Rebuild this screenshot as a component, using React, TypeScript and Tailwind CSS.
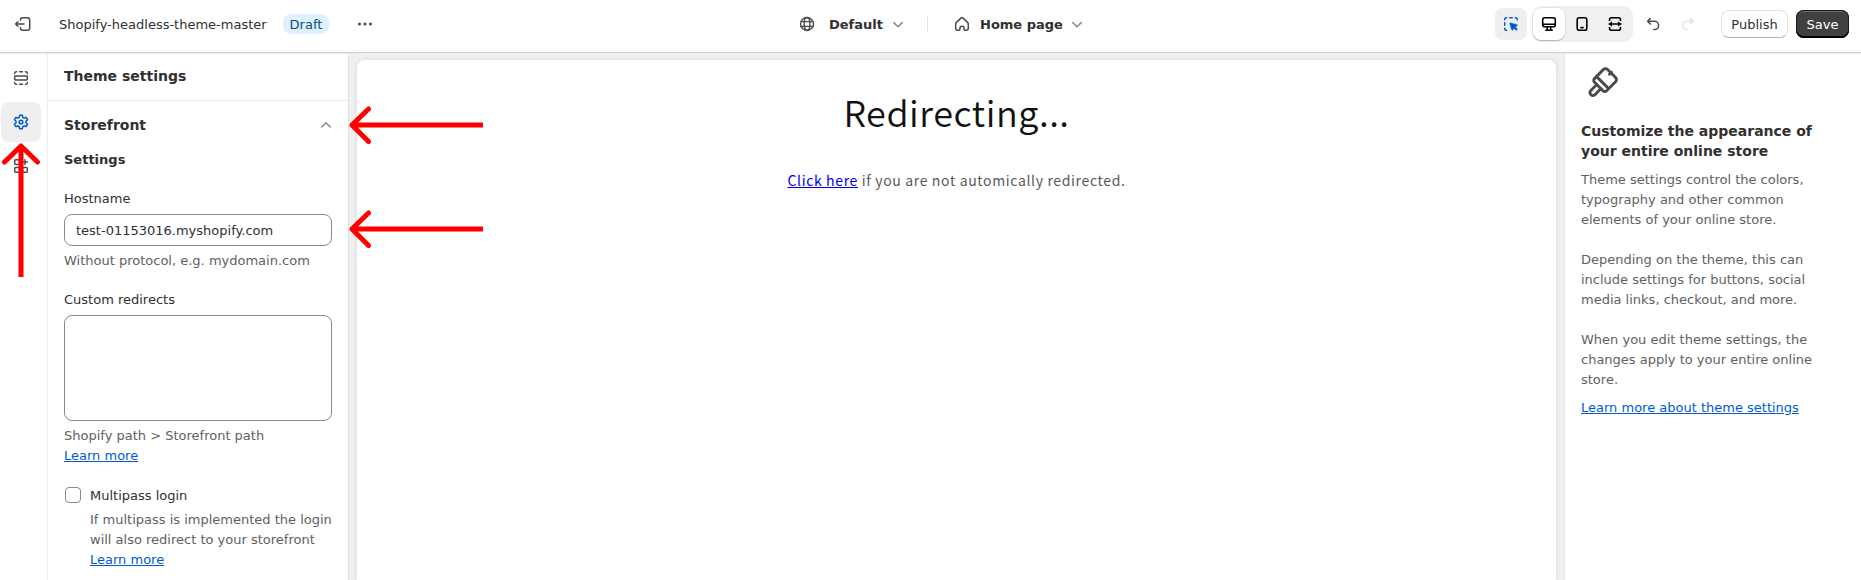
import React from "react";

type IconProps = { className?: string; children: React.ReactNode; width?: number };

function Icon({ className = "", children, width = 1.5 }: IconProps) {
  return (
    <svg
      viewBox="0 0 20 20"
      className={`block size-5 shrink-0 ${className}`}
      fill="none"
      stroke="currentColor"
      strokeWidth={width}
      strokeLinecap="round"
      strokeLinejoin="round"
    >
      {children}
    </svg>
  );
}

const ExitIcon = () => (
  <Icon className="text-[#4a4a4a]">
    <path d="M7.5 6.3v-.3A2.3 2.3 0 0 1 9.8 3.7h4.600a2.300 2.300 0 0 1 2.300 2.300v7.900a2.300 2.300 0 0 1-2.300 2.300H9.800a2.300 2.300 0 0 1-2.300-2.300v-.4" />
    <path d="M11 10H2.600M4.900 7.800 2.600 10l2.300 2.200" />
  </Icon>
);

const SectionsIcon = () => (
  <Icon className="text-[#4a4a4a]">
    <rect x="3.700" y="8" width="12.600" height="4" rx=".7" />
    <path d="M3.7 5.600v-.3c0-.9.7-1.600 1.600-1.600h.2M8.600 3.700h2.800M14.500 3.700h.2c.9 0 1.600.7 1.600 1.600v.3M3.700 14.400v.3c0 .9.7 1.600 1.600 1.600h.2M8.600 16.300h2.800M14.500 16.300h.2c.9 0 1.600-.7 1.600-1.600v-.3" />
  </Icon>
);

const GearIcon = () => (
  <Icon className="text-[#005bd3]">
    <path d="M8.7 3.2h2.6l.5 2.1 1.3.75 2.1-.6 1.3 2.25-1.55 1.5v1.6l1.55 1.5-1.3 2.25-2.1-.6-1.3.75-.5 2.1H8.7l-.5-2.1-1.3-.75-2.1.6-1.3-2.25 1.55-1.5V9.2L3.5 7.7l1.3-2.25 2.1.6 1.3-.75z" />
    <circle cx="10" cy="10" r="1.8" />
  </Icon>
);

const AppsIcon = () => (
  <Icon className="text-[#4a4a4a]">
    <rect x="3.7" y="3.7" width="4.8" height="4.8" rx="1" />
    <rect x="3.7" y="11.5" width="4.8" height="4.8" rx="1" />
    <rect x="11.5" y="11.5" width="4.8" height="4.8" rx="1" />
    <path d="M14 3.7v4.8M11.6 6.1h4.8" />
  </Icon>
);

const GlobeIcon = () => (
  <Icon className="text-[#4a4a4a]" width={1.4}>
    <circle cx="10" cy="10" r="6.5" />
    <ellipse cx="10" cy="10" rx="2.9" ry="6.5" />
    <path d="M4.2 7.6h11.6M4.2 12.4h11.6" />
  </Icon>
);

const HomeIcon = () => (
  <Icon className="text-[#4a4a4a]">
    <path d="M8.9 4.1a1.6 1.6 0 0 1 2.2 0l4.4 4.3c.5.5.8 1.1.8 1.8v4c0 1.1-.9 2-2 2h-1.5a.7.7 0 0 1-.7-.7v-1.2a2.1 2.1 0 0 0-4.2 0v1.2a.7.7 0 0 1-.7.7H5.7a2 2 0 0 1-2-2v-4c0-.7.3-1.3.8-1.8z" />
  </Icon>
);

const ChevronDown = () => (
  <Icon className="text-[#8a8a8a]">
    <path d="m5.8 8.6 4.2 4.2 4.2-4.2" />
  </Icon>
);

const ChevronUp = () => (
  <Icon className="text-[#8a8a8a]">
    <path d="M5.8 12 10 7.8l4.2 4.2" />
  </Icon>
);

const InspectorIcon = () => (
  <Icon className="text-[#005bd3]">
    <path d="M3.7 5.8v-.5c0-.9.7-1.6 1.6-1.6h.4M8.7 3.7h2.6M14.3 3.7h.4c.9 0 1.6.7 1.6 1.6v.5M3.7 8.8v2.4M3.7 14.3v.4c0 .9.7 1.6 1.6 1.6h.4" />
    <path
      d="M9.6 8.9a.6.6 0 0 0-.75.75l1.9 6.3c.17.5.85.55 1.07.1l1.05-1.95 2.3 2.3 1.3-1.3-2.25-2.3 1.9-1c.45-.25.4-.9-.1-1.07z"
      fill="currentColor"
      strokeWidth=".6"
    />
  </Icon>
);

const DesktopIcon = () => (
  <Icon className="text-black" width={1.6}>
    <rect x="3.7" y="3.8" width="12.6" height="9" rx="2" />
    <path d="M3.9 10.2h12.2M8.3 13v2.8M11.7 13v2.8M6.8 16.2h6.4" />
  </Icon>
);

const MobileIcon = () => (
  <Icon className="text-black" width={1.6}>
    <rect x="5.2" y="3.7" width="9.6" height="12.6" rx="2" />
    <path d="M9 13.6h2" />
  </Icon>
);

const FullWidthIcon = () => (
  <Icon className="text-black" width={1.6}>
    <path d="M4.500 6.500v-.8c0-1.100.9-2 2-2h7c1.100 0 2 .9 2 2v.8M4.500 13.500v.8c0 1.100.9 2 2 2h7c1.100 0 2-.9 2-2v-.8" />
    <path d="M4.200 10h11.600" />
    <path d="M6.300 8.300 4.300 10l2 1.700zM13.700 8.300l2 1.700-2 1.700z" fill="currentColor" strokeWidth="1" />
  </Icon>
);

const UndoIcon = ({ className }: { className: string }) => (
  <Icon className={className}>
    <path d="M7.3 4.5 4.6 7.2l2.7 2.7M4.8 7.2h6.6a4.2 4.2 0 0 1 0 8.4h-.6" />
  </Icon>
);

const BrushIcon = () => (
  <svg
    viewBox="0 0 32 32"
    className="block size-8 text-[#4a4a4a]"
    fill="none"
    stroke="currentColor"
    strokeWidth="2.9"
    strokeLinejoin="round"
    strokeLinecap="round"
  >
    <path d="M16.4 3.5a3 3 0 0 1 4.2 0l8 8a3 3 0 0 1 0 4.2l-9 9a2.6 2.6 0 0 1-3.7 0l-8.4-8.4a2.6 2.6 0 0 1 0-3.7z" />
    <path d="m9.6 10.6 11.700 11.700M22.500 8.300l2-2" />
    <path d="m9.800 18.500-6.200 6.200a3 3 0 0 0 4.200 4.200l6.100-6.300" />
  </svg>
);

function DeviceGroup() {
  return (
    <div className="flex h-9 items-center rounded-[10px] bg-[#f0f0f0] pl-px pr-0.5">
      <div className="flex size-8 items-center justify-center rounded-lg bg-white shadow-[0_1px_1px_#b5b5b5,0_0_0_1px_#e6e6e6]">
        <DesktopIcon />
      </div>
      <div className="flex w-[34px] justify-center">
        <MobileIcon />
      </div>
      <div className="flex w-8 justify-center">
        <FullWidthIcon />
      </div>
    </div>
  );
}

function TopBar() {
  return (
    <header className="relative z-10 flex h-[52px] shrink-0 items-center bg-white pb-1 shadow-[0_1px_0_#d0d0d0,0_2px_0_#ececec]">
      <div className="flex w-[799px] items-center pl-[13px]">
        <ExitIcon />
        <span className="ml-[26px] w-[224px] pt-0.5">Shopify-headless-theme-master</span>
        <span className="flex h-5 w-[46px] items-center justify-center rounded-lg bg-[#e0f0ff] pt-0.5 text-[#00527c]">
          Draft
        </span>
        <svg viewBox="0 0 20 20" className="ml-[26px] size-5" fill="#4a4a4a">
          <circle cx="4.500" cy="10" r="1.500" />
          <circle cx="10" cy="10" r="1.500" />
          <circle cx="15.500" cy="10" r="1.500" />
        </svg>
      </div>
      <div className="flex items-center font-bold">
        <div className="-ml-0.5 flex w-[130px] items-center">
          <GlobeIcon />
          <span className="ml-3 w-[59px] pt-0.5">Default</span>
          <ChevronDown />
        </div>
        <div className="h-4 w-px bg-[#e3e3e3]" />
        <div className="ml-6 flex items-center">
          <HomeIcon />
          <span className="ml-2 w-[87px] whitespace-nowrap pt-0.5">Home page</span>
          <ChevronDown />
        </div>
      </div>
      <div className="ml-auto flex items-center pr-3">
        <div className="mr-[5px] flex size-8 items-center justify-center rounded-lg bg-[#efefef]">
          <InspectorIcon />
        </div>
        <DeviceGroup />
        <div className="ml-[10px] flex w-[78px] gap-[15px]">
          <UndoIcon className="text-[#4a4a4a]" />
          <UndoIcon className="-scale-x-100 text-[#e3e3e3]" />
        </div>
        <button className="flex h-7 w-[67px] items-center justify-center rounded-lg border border-[#e3e3e3] border-b-[#b5b5b5] bg-white pt-0.5">
          Publish
        </button>
        <button className="ml-2 flex h-7 w-[53px] items-center justify-center rounded-lg bg-[#404040] pt-0.5 text-white shadow-[inset_0_-2px_0_#000,inset_0_0_0_1px_#1a1a1a,inset_0_2px_0_#6a6a6a]">
          Save
        </button>
      </div>
    </header>
  );
}

function Rail() {
  return (
    <nav className="flex w-12 shrink-0 flex-col gap-1 border-r border-[#ebebeb] pl-px pt-1.5">
      <div className="flex size-10 items-center justify-center">
        <SectionsIcon />
      </div>
      <div className="flex size-10 items-center justify-center rounded-lg bg-[#efefef]">
        <GearIcon />
      </div>
      <div className="flex size-10 items-center justify-center">
        <AppsIcon />
      </div>
    </nav>
  );
}

function LearnMore({ children }: { children: React.ReactNode }) {
  return (
    <a href="#" className="text-[#005bd3] underline">
      {children}
    </a>
  );
}

function SettingsPanel() {
  return (
    <aside className="w-[301px] shrink-0 overflow-hidden border-r border-[#e3e3e3] bg-white">
      <h2 className="flex h-[49px] items-center border-b border-[#ebebeb] px-4 text-sm font-bold">Theme settings</h2>
      <div className="px-4 pt-[14px]">
        <div className="flex items-center justify-between">
          <h3 className="text-sm/5 font-bold">Storefront</h3>
          <div className="-mr-1">
            <ChevronUp />
          </div>
        </div>
        <h4 className="mt-[15px] font-bold">Settings</h4>
        <label className="mt-[19px] block">Hostname</label>
        <div className="mt-[5px] flex h-8 items-center rounded-lg border border-[#8a8a8a] bg-white px-[11px] pt-0.5">
          test-01153016.myshopify.com
        </div>
        <p className="mt-[5px] text-[#616161]">Without protocol, e.g. mydomain.com</p>
        <label className="mt-[19px] block">Custom redirects</label>
        <div className="mt-[5px] h-[106px] rounded-lg border border-[#8a8a8a] bg-white" />
        <p className="mt-[5px] text-[#616161]">
          Shopify path &gt; Storefront path
          <br />
          <LearnMore>Learn more</LearnMore>
        </p>
        <div className="mt-5 flex">
          <div className="ml-px mt-px size-4 shrink-0 rounded border border-[#8a8a8a] bg-white" />
          <div className="ml-[9px] whitespace-nowrap">
            <p>Multipass login</p>
            <p className="mt-1 text-[#616161]">
              If multipass is implemented the login
              <br />
              will also redirect to your storefront
              <br />
              <LearnMore>Learn more</LearnMore>
            </p>
          </div>
        </div>
      </div>
    </aside>
  );
}

function Preview() {
  return (
    <main className="flex flex-1 bg-[#f0f0f0] pl-2 pr-2 pt-2">
      <div className="flex-1 rounded-t-lg bg-white text-center font-['Noto_Sans_CJK_JP','Noto_Sans',sans-serif] shadow-[0_0_5px_#d8d8d8]">
        <h1 className="mt-[25px] text-[36px]/[52px] font-[350] tracking-[0.55px] text-[#121212]">Redirecting...</h1>
        <p className="mt-[30px] text-[14px]/[27px] tracking-[0.65px] text-[#5a5a5a]">
          <a href="#" className="text-[#0000ee] underline">
            Click here
          </a>{" "}
          if you are not automically redirected.
        </p>
      </div>
    </main>
  );
}

function InfoPanel() {
  return (
    <aside className="w-[297px] shrink-0 border-l border-[#e3e3e3] bg-white pl-4 text-[#616161]">
      <div className="ml-[6px] mt-[14px]">
        <BrushIcon />
      </div>
      <h2 className="mt-[23px] w-[250px] text-sm/5 font-bold text-[#303030]">
        Customize the appearance of your entire online store
      </h2>
      <div className="mt-[9px] flex w-[250px] flex-col gap-5">
        <p>Theme settings control the colors, typography and other common elements of your online store.</p>
        <p>Depending on the theme, this can include settings for buttons, social media links, checkout, and more.</p>
        <p>When you edit theme settings, the changes apply to your entire online store.</p>
      </div>
      <p className="mt-2">
        <LearnMore>Learn more about theme settings</LearnMore>
      </p>
    </aside>
  );
}

function Arrows() {
  return (
    <svg
      className="pointer-events-none absolute left-0 top-0 z-20"
      width="500"
      height="300"
      fill="none"
      stroke="#ff0000"
      strokeWidth="5"
      strokeLinejoin="round"
    >
      <path d="M483 125H353M483 229H353M21 277V147" />
      <path
        strokeLinecap="round"
        d="M368.500 109 352 125l16.500 16.500M368.500 213 352 229l16.500 16.500M4.500 162 21 146l16.500 16"
      />
    </svg>
  );
}

export default function App() {
  return (
    <div className="relative flex h-[580px] flex-col overflow-hidden bg-white font-['DejaVu_Sans',sans-serif] text-[13px]/5 text-[#303030]">
      <TopBar />
      <div className="flex min-h-0 flex-1">
        <Rail />
        <SettingsPanel />
        <Preview />
        <InfoPanel />
      </div>
      <Arrows />
    </div>
  );
}
